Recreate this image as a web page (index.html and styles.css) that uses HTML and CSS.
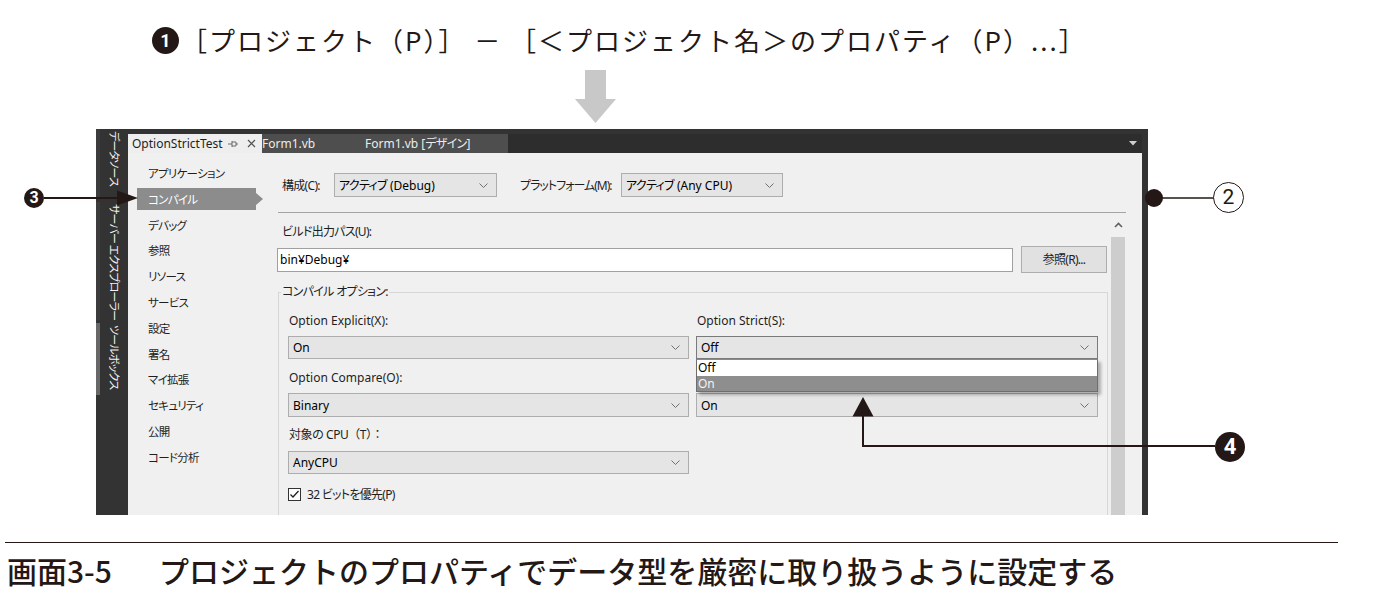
FILE: index.html
```html
<!DOCTYPE html>
<html lang="ja">
<head>
<meta charset="utf-8">
<title>画面3-5</title>
<link rel="stylesheet" href="styles.css">
</head>
<body>
<div class="page">
  <h1 class="title"><span class="num-title">1</span><span class="title-text">［プロジェクト（P）］ － ［＜プロジェクト名＞のプロパティ（P）...］</span></h1>
  <div class="down-arrow">
    <svg width="42" height="65" viewBox="0 0 42 65"><polygon points="10,6 31,6 31,35 41,35 20.5,59 0,35 10,35" fill="#c8c8c8"/></svg>
  </div>

  <div class="frame ui">
    <div class="sidebar">
      <div class="vtab vtab-data">データソース</div>
      <div class="vtab vtab-server">サーバー エクスプローラー</div>
      <div class="vtab vtab-tool">ツールボックス</div>
    </div>
    <div class="main">
      <div class="tabs">
        <div class="tab-active">
          <span class="tab-name">OptionStrictTest</span>
          <svg class="pin" width="10" height="8" viewBox="0 0 10 8"><path d="M0 4H4M4 1V7M4 2H8V6H4M8 4H10" fill="none" stroke="#6a6a6a" stroke-width="1"/></svg>
          <svg class="close" width="9" height="9" viewBox="0 0 9 9"><path d="M1 1L8 8M8 1L1 8" stroke="#555" stroke-width="1.2"/></svg>
        </div>
        <div class="tab-others">
          <span class="tab-form">Form1.vb</span>
          <span class="tab-design">Form1.vb [<span class="ja">デザイン</span>]</span>
        </div>
        <div class="tab-fill"><svg width="8" height="5" viewBox="0 0 8 5"><polygon points="0,0 8,0 4,4.5" fill="#d0d0d0"/></svg></div>
      </div>
      <div class="panel">
        <ul class="nav ja">
          <li class="nav-item">アプリケーション</li>
          <li class="nav-item selected">コンパイル</li>
          <li class="nav-item">デバッグ</li>
          <li class="nav-item">参照</li>
          <li class="nav-item">リソース</li>
          <li class="nav-item">サービス</li>
          <li class="nav-item">設定</li>
          <li class="nav-item">署名</li>
          <li class="nav-item">マイ拡張</li>
          <li class="nav-item">セキュリティ</li>
          <li class="nav-item">公開</li>
          <li class="nav-item">コード分析</li>
        </ul>
        <div class="content">
          <div class="config-row">
            <span class="lbl lbl-config ja">構成(C):</span>
            <div class="dd dd-config"><span><span class="ja">アクティブ</span> (Debug)</span><svg class="chev" width="9" height="5" viewBox="0 0 9 5"><path d="M0.5 0.5L4.5 4.5L8.5 0.5" fill="none" stroke="#707070"/></svg></div>
            <span class="lbl lbl-platform ja">プラットフォーム(M):</span>
            <div class="dd dd-platform"><span><span class="ja">アクティブ</span> (Any CPU)</span><svg class="chev" width="9" height="5" viewBox="0 0 9 5"><path d="M0.5 0.5L4.5 4.5L8.5 0.5" fill="none" stroke="#707070"/></svg></div>
          </div>
          <div class="sep"></div>
          <div class="scroll-area">
            <div class="scroll-content">
              <div class="lbl lbl-build ja">ビルド出力パス(U):</div>
              <div class="path-row">
                <div class="textbox">bin¥Debug¥</div>
                <div class="btn ja">参照(R)...</div>
              </div>
              <fieldset class="group">
                <legend class="group-legend ja">コンパイル オプション:</legend>
                <div class="opt-grid">
                  <div class="opt-lbl r1">Option Explicit(X):</div>
                  <div class="opt-lbl r1">Option Strict(S):</div>
                  <div class="dd r2"><span>On</span><svg class="chev" width="9" height="5" viewBox="0 0 9 5"><path d="M0.5 0.5L4.5 4.5L8.5 0.5" fill="none" stroke="#707070"/></svg></div>
                  <div class="dd dd-open r2"><span>Off</span><svg class="chev" width="9" height="5" viewBox="0 0 9 5"><path d="M0.5 0.5L4.5 4.5L8.5 0.5" fill="none" stroke="#707070"/></svg>
                    <div class="dd-list">
                      <div class="dd-option">Off</div>
                      <div class="dd-option hl">On</div>
                    </div>
                  </div>
                  <div class="opt-lbl r3">Option Compare(O):</div>
                  <div class="opt-lbl r3"></div>
                  <div class="dd r4"><span>Binary</span><svg class="chev" width="9" height="5" viewBox="0 0 9 5"><path d="M0.5 0.5L4.5 4.5L8.5 0.5" fill="none" stroke="#707070"/></svg></div>
                  <div class="dd r4"><span>On</span><svg class="chev" width="9" height="5" viewBox="0 0 9 5"><path d="M0.5 0.5L4.5 4.5L8.5 0.5" fill="none" stroke="#707070"/></svg></div>
                  <div class="opt-lbl r5 cpu-lbl">対象の CPU（T）：</div>
                  <div class="opt-lbl r5"></div>
                  <div class="dd r6"><span>AnyCPU</span><svg class="chev" width="9" height="5" viewBox="0 0 9 5"><path d="M0.5 0.5L4.5 4.5L8.5 0.5" fill="none" stroke="#707070"/></svg></div>
                  <div class="r6"></div>
                  <div class="check-row r7">
                    <svg class="checkbox" width="13" height="13" viewBox="0 0 13 13"><rect x="0.5" y="0.5" width="12" height="12" fill="#fff" stroke="#333"/><path d="M2.5 6.5L5 9L10.5 3" fill="none" stroke="#222" stroke-width="1.3"/></svg>
                    <span class="ja">32 ビットを優先(P)</span>
                  </div>
                </div>
              </fieldset>
            </div>
            <div class="scrollbar">
              <div class="scroll-up"><svg width="9" height="6" viewBox="0 0 9 6"><path d="M1 5L4.5 1.5L8 5" fill="none" stroke="#606060" stroke-width="1.6"/></svg></div>
              <div class="scroll-thumb"></div>
            </div>
          </div>
        </div>
      </div>
    </div>
    <div class="frame-right"></div>
  </div>

  <div class="rule"></div>
  <p class="caption"><span class="fig-no">画面3-5</span><span class="caption-text">プロジェクトのプロパティでデータ型を厳密に取り扱うように設定する</span></p>

  <svg class="callouts" width="1396" height="593" viewBox="0 0 1396 593">
    <path d="M44 198H119" stroke="#231815" stroke-width="2" fill="none"/>
    <polygon points="117,190.5 138,198 117,205.5" fill="#231815"/>
    <path d="M1162 198H1214" stroke="#231815" stroke-width="1.5" fill="none"/>
    <path d="M1215 446H863V414" stroke="#231815" stroke-width="2" fill="none"/>
    <polygon points="852.5,416.5 863,397 873.5,416.5" fill="#231815"/>
  </svg>
  <span class="mark mark-3">3</span>
  <span class="dot-2"></span>
  <span class="mark-ring">2</span>
  <span class="mark mark-4">4</span>
</div>
</body>
</html>
```

FILE: styles.css
```css
html, body {
  margin: 0;
  padding: 0;
  background: #ffffff;
}

.page {
  position: relative;
  width: 1396px;
  height: 593px;
  overflow: hidden;
  font-family: "Noto Sans CJK JP", "Noto Sans", sans-serif;
  color: #231815;
}

/* ---------- title ---------- */
.title {
  margin: 0;
  height: 48px;
  padding: 16px 0 0 152px;
  display: flex;
  align-items: center;
  gap: 2px;
  font-size: 26px;
  font-weight: 400;
  line-height: 48px;
}

.title-text {
  letter-spacing: 2px;
}

.num-title {
  width: 27px;
  height: 27px;
  border-radius: 50%;
  background: #231815;
  color: #ffffff;
  font-family: "Roboto", "Liberation Sans", sans-serif;
  font-weight: 700;
  font-size: 18px;
  line-height: 27px;
  text-align: center;
}

.down-arrow {
  height: 65px;
  padding-left: 575px;
}

.down-arrow svg {
  display: block;
}

/* ---------- screenshot frame ---------- */
.ui {
  font-family: "Noto Sans", "Noto Sans CJK JP", sans-serif;
  font-size: 12px;
  font-feature-settings: "palt" 1;
}

.ja {
  letter-spacing: -0.7px;
}

.frame {
  margin-left: 96px;
  width: 1052px;
  height: 386px;
  display: grid;
  grid-template-columns: 32px 1014px 6px;
  grid-template-rows: 386px;
  overflow: hidden;
  background: #333333;
  color: #1e1e1e;
}

.sidebar {
  display: flex;
  flex-direction: column;
  gap: 3px;
}

.vtab {
  writing-mode: vertical-rl;
  text-orientation: sideways;
  box-sizing: border-box;
  border-left: 4px solid #3c3c3c;
  line-height: 27px;
  padding-top: 2px;
  color: #f2f2f2;
  font-family: "Noto Sans CJK JP", sans-serif;
  font-size: 11px;
  letter-spacing: -0.8px;
  white-space: nowrap;
}

.vtab-data { height: 70px; }
.vtab-server { height: 118px; }
.vtab-tool { height: 72px; border-left-color: #676767; }

.main {
  min-height: 0;
  display: flex;
  flex-direction: column;
  padding-top: 5px;
  overflow: hidden;
}

.tabs {
  flex: none;
  height: 19px;
  display: flex;
  background: #2d2d2d;
  line-height: 19px;
}

.tab-active {
  width: 134px;
  box-sizing: border-box;
  padding-left: 4px;
  background: #eeeeee;
  color: #1e1e1e;
  display: flex;
  align-items: center;
}

.tab-name { width: 96px; }

.close { margin-left: 9px; }

.tab-others {
  width: 246px;
  background: #4e4e4e;
  color: #ececec;
  display: flex;
}

.tab-form { width: 103px; }

.tab-fill {
  flex: 1;
  display: flex;
  justify-content: flex-end;
  align-items: center;
  padding-right: 5px;
}

.panel {
  flex: 1;
  min-height: 0;
  background: #f0f0f0;
  display: flex;
  overflow: hidden;
}

/* ---------- left nav ---------- */
.nav {
  list-style: none;
  margin: 0;
  width: 149px;
  flex: none;
  box-sizing: border-box;
  padding: 9px 0 0 9px;
  font-family: "Noto Sans CJK JP", sans-serif;
  font-size: 11.5px;
}

.nav-item {
  position: relative;
  width: 119px;
  height: 22px;
  line-height: 22px;
  margin-bottom: 3.8px;
  padding-left: 11px;
  box-sizing: border-box;
  color: #1e1e1e;
}

.nav-item.selected {
  background: #8c8c8c;
  color: #ffffff;
}

.nav-item.selected::after {
  content: "";
  position: absolute;
  left: 100%;
  top: 5px;
  border-left: 7px solid #8c8c8c;
  border-top: 6px solid transparent;
  border-bottom: 6px solid transparent;
}

/* ---------- content ---------- */
.content {
  width: 865px;
  flex: none;
  display: flex;
  flex-direction: column;
  min-height: 0;
}

.config-row {
  flex: none;
  display: flex;
  align-items: center;
  margin-top: 20px;
  padding-left: 5px;
  height: 24px;
}

.lbl {
  white-space: nowrap;
}

.lbl-config { width: 52px; }

.lbl-platform {
  width: 101px;
  margin-left: 23px;
  letter-spacing: -1px;
}

.dd {
  position: relative;
  height: 24px;
  box-sizing: border-box;
  border: 1px solid #adadad;
  background: #e5e5e5;
  display: flex;
  align-items: center;
  justify-content: space-between;
  padding: 0 8px 0 4px;
  color: #000000;
  white-space: nowrap;
}

.dd-config { width: 163px; flex: none; }
.dd-platform { width: 162px; flex: none; }

.chev { flex: none; }

.sep {
  flex: none;
  margin: 15px 0 0 1px;
  width: 848px;
  height: 1px;
  background: #a5a5a5;
}

.scroll-area {
  flex: 1;
  min-height: 0;
  display: flex;
  overflow: hidden;
}

.scroll-content {
  width: 831px;
  flex: none;
}

.lbl-build {
  margin-top: 8px;
  height: 22px;
  line-height: 22px;
  padding-left: 5px;
}

.path-row {
  margin-top: 3px;
  display: flex;
  align-items: center;
  height: 27px;
}

.textbox {
  width: 736px;
  height: 24px;
  box-sizing: border-box;
  border: 1px solid #a0a0a0;
  background: #ffffff;
  line-height: 22px;
  padding-left: 2px;
  color: #000000;
}

.btn {
  margin-left: 8px;
  width: 86px;
  height: 27px;
  box-sizing: border-box;
  border: 1px solid #adadad;
  background: #e1e1e1;
  text-align: center;
  line-height: 25px;
  color: #1e1e1e;
}

.group {
  margin: 10px 0 0 1px;
  padding: 0 9px 0 9px;
  width: 830px;
  box-sizing: border-box;
  height: 260px;
  border: 1px solid #d6d6d6;
  border-bottom: none;
  min-inline-size: 0;
}

.group-legend {
  margin-left: -7px;
  padding: 0 1px;
  line-height: 18px;
  color: #1e1e1e;
}

.opt-grid {
  display: grid;
  grid-template-columns: 401px 402px;
  column-gap: 7px;
}

.opt-lbl {
  height: 22px;
  line-height: 22px;
  padding-left: 1px;
  color: #1e1e1e;
}

.cpu-lbl {
  font-feature-settings: normal;
  letter-spacing: -0.5px;
}

.r1 { margin-top: 9px; }
.r2 { margin-top: 4px; height: 23px; }
.r3 { margin-top: 8px; }
.r4 { margin-top: 4px; height: 24px; }
.r5 { margin-top: 7px; }
.r6 { margin-top: 5px; height: 23px; }
.r7 { margin-top: 9px; }

.dd-open {
  border-color: #7a7a7a;
}

.dd-list {
  position: absolute;
  left: -1px;
  right: -1px;
  top: 22px;
  border: 1px solid #6e6e6e;
  border-top-color: #8a8a8a;
  background: #ffffff;
  box-shadow: 3px 3px 3px rgba(0, 0, 0, 0.28);
  z-index: 2;
}

.dd-option {
  height: 15.5px;
  line-height: 15px;
  padding-left: 1px;
  color: #000000;
}

.dd-option.hl {
  background: #8e8e8e;
  color: #f4f4f4;
}

.check-row {
  grid-column: 1 / span 2;
  height: 22px;
  display: flex;
  align-items: center;
  gap: 6px;
  color: #1e1e1e;
}

.scrollbar {
  margin-left: 3px;
  width: 14px;
  flex: none;
  display: flex;
  flex-direction: column;
}

.scroll-up {
  height: 24px;
  display: flex;
  justify-content: center;
  align-items: center;
}

.scroll-thumb {
  flex: 1;
  background: #cdcdcd;
}

/* ---------- caption ---------- */
.rule {
  margin: 27px 0 0 5px;
  width: 1333px;
  height: 0;
  border-top: 1.5px solid #231815;
}

.caption {
  margin: 12px 0 0 7px;
  display: flex;
  font-size: 30px;
  font-weight: 500;
  line-height: 30px;
  white-space: nowrap;
  color: #231815;
}

.fig-no {
  width: 152px;
  font-size: 30px;
}

/* ---------- callouts (overlay) ---------- */
.callouts {
  position: absolute;
  left: 0;
  top: 0;
  pointer-events: none;
}

.mark {
  position: absolute;
  border-radius: 50%;
  background: #231815;
  color: #ffffff;
  font-family: "Roboto", "Liberation Sans", sans-serif;
  font-weight: 700;
  text-align: center;
}

.mark-3 {
  left: 24px;
  top: 188px;
  width: 20px;
  height: 20px;
  line-height: 20px;
  font-size: 16px;
}

.mark-4 {
  left: 1215px;
  top: 432px;
  width: 30px;
  height: 30px;
  line-height: 30px;
  font-size: 22px;
}

.dot-2 {
  position: absolute;
  left: 1145px;
  top: 189px;
  width: 18px;
  height: 18px;
  border-radius: 50%;
  background: #231815;
}

.mark-ring {
  position: absolute;
  left: 1213px;
  top: 182px;
  width: 29px;
  height: 29px;
  border: 1.5px solid #231815;
  border-radius: 50%;
  background: #ffffff;
  color: #231815;
  font-family: "Roboto", "Liberation Sans", sans-serif;
  font-size: 21px;
  line-height: 29px;
  text-align: center;
}
```
